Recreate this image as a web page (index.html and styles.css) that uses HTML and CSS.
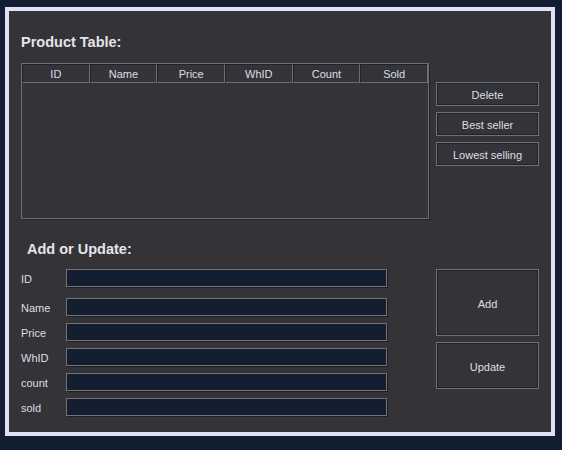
FILE: index.html
```html
<!DOCTYPE html>
<html>
<head>
<meta charset="utf-8">
<link rel="stylesheet" href="styles.css">
</head>
<body>
<div class="frame">
  <section class="top">
    <div class="table-col">
      <h2 class="title">Product Table:</h2>
      <div class="table">
        <div class="thead">
          <div class="th">ID</div>
          <div class="th">Name</div>
          <div class="th">Price</div>
          <div class="th">WhID</div>
          <div class="th">Count</div>
          <div class="th">Sold</div>
        </div>
      </div>
    </div>
    <div class="btn-col">
      <button class="btn small">Delete</button>
      <button class="btn small">Best seller</button>
      <button class="btn small">Lowest selling</button>
    </div>
  </section>
  <section class="bottom">
    <h2 class="title title2">Add or Update:</h2>
    <div class="form-area">
      <div class="form">
        <label class="row first"><span class="lbl">ID</span><span class="input"></span></label>
        <label class="row"><span class="lbl">Name</span><span class="input"></span></label>
        <label class="row"><span class="lbl">Price</span><span class="input"></span></label>
        <label class="row"><span class="lbl">WhID</span><span class="input"></span></label>
        <label class="row"><span class="lbl">count</span><span class="input"></span></label>
        <label class="row"><span class="lbl">sold</span><span class="input"></span></label>
      </div>
      <div class="btn-col2">
        <button class="btn add">Add</button>
        <button class="btn update">Update</button>
      </div>
    </div>
  </section>
</div>
</body>
</html>
```

FILE: styles.css
```css
html, body {
  margin: 0;
  padding: 0;
  background: #131e30;
}
body {
  padding: 7px 7px 14px 5px;
  font-family: "Liberation Sans", Arial, sans-serif;
  font-size: 11px;
  color: #dcdfe8;
}
.frame {
  box-sizing: border-box;
  width: 550px;
  height: 429px;
  border: 4px solid #e2e0f8;
  background: #343337;
  padding: 23px 0 0 12px;
}
.title {
  margin: 0;
  font-size: 14.5px;
  line-height: 16px;
  font-weight: bold;
  color: #e4e4ea;
}
.top {
  display: flex;
  gap: 7px;
}
.table-col {
  width: 408px;
}
.table-col .title {
  margin-bottom: 13px;
}
.table {
  box-sizing: border-box;
  width: 408px;
  height: 156px;
  border: 1px solid #6f6f72;
  box-shadow: 1px 1px 0 #222028;
}
.thead {
  display: grid;
  grid-template-columns: repeat(6, 1fr);
  height: 19px;
}
.th {
  box-sizing: border-box;
  height: 19px;
  border-top: 1px solid #1b2231;
  border-left: 1px solid #1b2231;
  border-right: 1px solid #6f6f72;
  border-bottom: 1px solid #6f6f72;
  text-align: center;
  padding-top: 1px;
  line-height: 17px;
  font-size: 11px;
  overflow: hidden;
}
.btn {
  box-sizing: border-box;
  display: block;
  width: 103px;
  margin: 0;
  padding: 2px 0 0;
  background: #343337;
  border: 1px solid #717174;
  box-shadow: inset 1px 1px 0 #1b2231, inset -1px -1px 0 #1b2231;
  color: #dcdfe8;
  font-family: "Liberation Sans", Arial, sans-serif;
  font-size: 11px;
}
.btn-col {
  display: flex;
  flex-direction: column;
  gap: 6px;
  padding-top: 48px;
}
.btn.small {
  height: 24px;
}
.bottom {
  padding-top: 22px;
}
.title2 {
  margin-left: 6px;
  margin-bottom: 12px;
}
.form-area {
  display: flex;
  gap: 49px;
}
.form {
  display: flex;
  flex-direction: column;
  gap: 7px;
}
.row {
  display: flex;
  align-items: center;
  height: 18px;
}
.row.first {
  margin-bottom: 4px;
}
.lbl {
  width: 45px;
  padding-top: 2px;
  font-size: 11px;
}
.input {
  box-sizing: border-box;
  width: 321px;
  height: 18px;
  background: #131e30;
  border: 1px solid #737376;
  box-shadow: 1px 1px 0 #1f1e24;
}
.btn-col2 {
  display: flex;
  flex-direction: column;
  gap: 6px;
}
.btn.add {
  height: 67px;
}
.btn.update {
  height: 47px;
}
```
